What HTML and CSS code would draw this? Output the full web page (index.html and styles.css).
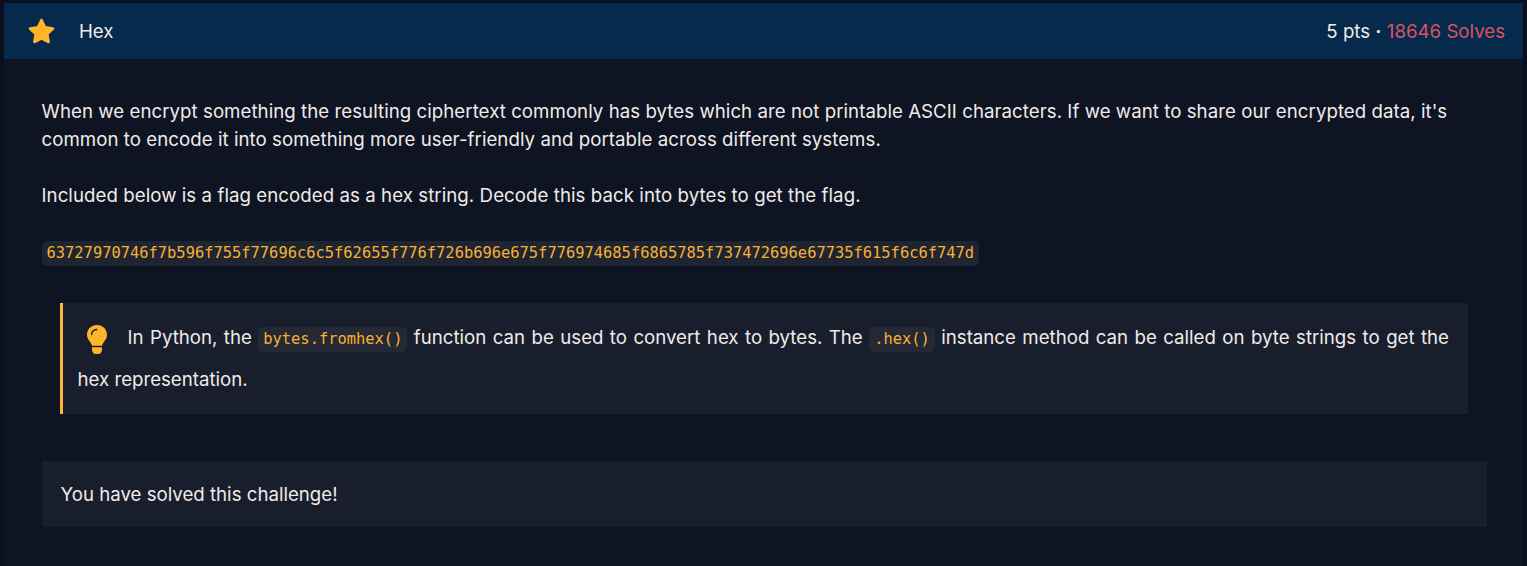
FILE: index.html
```html
<!DOCTYPE html>
<html lang="en">
<head>
<meta charset="utf-8">
<title>Hex</title>
<link rel="stylesheet" href="styles.css">
</head>
<body>
<main class="challenge">
  <header class="challenge-header">
    <svg class="star" viewBox="0 0 24 24"><path d="M12 1.8 15.1 8.3 22.2 9.3 17.100 14.300 18.300 21.300 12 18 5.700 21.300 6.900 14.300 1.800 9.300 8.900 8.300Z"/></svg>
    <span class="title">Hex</span>
    <span class="score">5 pts <b class="dot">·</b> <span class="solves">18646 Solves</span></span>
  </header>
  <div class="challenge-body">
    <p class="text intro">When we encrypt something the resulting ciphertext commonly has bytes which are not printable ASCII characters. If we want to share our encrypted data, it's<br>common to encode it into something more user-friendly and portable across different systems.</p>
    <p class="text task">Included below is a flag encoded as a hex string. Decode this back into bytes to get the flag.</p>
    <p class="text"><code>63727970746f7b596f755f77696c6c5f62655f776f726b696e675f776974685f6865785f737472696e67735f615f6c6f747d</code></p>
    <blockquote class="hint"><svg class="bulb" viewBox="0 0 20 29"><path d="M10 0C4.300 0 0 4.300 0 9.800c0 3.600 1.800 5.500 3.400 7.600.9 1.300 1.400 2.200 1.700 3.300h9.800c.3-1.100.8-2 1.700-3.300C18.200 15.300 20 13.400 20 9.800 20 4.300 15.700 0 10 0ZM5 22.300h10v2.500c0 2.500-1.600 4.200-3.900 4.200H8.900C6.600 29 5 27.300 5 24.800Z"/><path class="shine" d="M4.600 9.600c0-3.100 2.100-5 5.100-5"/></svg>In Python, the <code>bytes.fromhex()</code> function can be used to convert hex to bytes. The <code>.hex()</code> instance method can be called on byte strings to get the hex representation.</blockquote>
    <div class="solved">You have solved this challenge!</div>
  </div>
</main>
</body>
</html>
```
FILE: styles.css
```css
* { box-sizing: border-box; }
body {
  margin: 0;
  padding: 3px 4px 0;
  height: 566px;
  overflow: hidden;
  background: #090f1d;
  color: #f0ebea;
  font: 18.67px/28px Inter, "Liberation Sans", sans-serif;
}
.challenge { height: 563px; background: #0f1422; }
.challenge-header {
  display: flex;
  align-items: center;
  height: 56px;
  padding: 0 18px 0 24px;
  background: #052a4c;
}
.star {
  width: 27px;
  height: 27px;
  fill: #ffb42a;
  stroke: #ffb42a;
  stroke-width: 2.4;
  stroke-linejoin: round;
}
.title { margin-left: 24px; padding-top: 2px; }
.score { margin-left: auto; padding-top: 2px; }
.dot { font-weight: 700; }
.solves { color: #d9545f; }
.challenge-body { padding: 39px 36px 0 37.5px; }
.text { margin: 0 0 28px; white-space: nowrap; }
.intro { letter-spacing: 0.046px; }
.task { letter-spacing: 0.06px; }
code {
  padding: 3px 5px 4px;
  border-radius: 5px;
  background: #1f2530;
  color: #f9b032;
  font: 15.4px/22px "DejaVu Sans Mono", monospace;
  letter-spacing: 0.01px;
}
.hint {
  height: 111px;
  margin: 37px 19px 47px 18.5px;
  padding: 14px 19px 13px 14.500px;
  border-left: 3px solid #ffb742;
  background: #191e2c;
  line-height: 42px;
  text-align: justify;
}
.hint code { background: #242935; }
.bulb {
  width: 20px;
  height: 29px;
  margin: 0 21px 0 9px;
  vertical-align: -10px;
  fill: #ffb42a;
}
.shine { fill: none; stroke: #191e2c; stroke-width: 1.5; stroke-linecap: round; }
.solved { height: 66px; padding: 20px 19px; background: #191e2c; }
```
